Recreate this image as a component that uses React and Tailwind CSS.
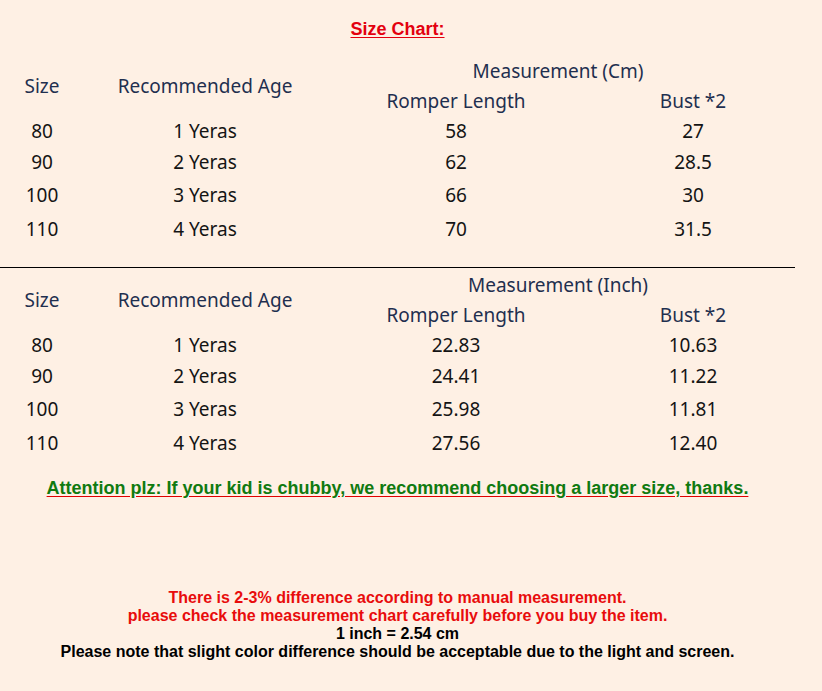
import React from "react";

const cm = [
  ["80", "1 Yeras", "58", "27"],
  ["90", "2 Yeras", "62", "28.5"],
  ["100", "3 Yeras", "66", "30"],
  ["110", "4 Yeras", "70", "31.5"],
];

const inch = [
  ["80", "1 Yeras", "22.83", "10.63"],
  ["90", "2 Yeras", "24.41", "11.22"],
  ["100", "3 Yeras", "25.98", "11.81"],
  ["110", "4 Yeras", "27.56", "12.40"],
];

const rowH = ["h-[30px]", "h-[32px]", "h-[34px]", "h-[34px]"];

const SizeTable = ({ unit, rows }) => {
  return (
    <div className="w-[800px] text-[19px] font-['Noto_Sans',sans-serif]">
      <div className="grid grid-cols-[84px_242px_260px_214px] text-[#1f2f4f]">
        <div className="row-span-2 flex items-center justify-center">Size</div>
        <div className="row-span-2 flex items-center justify-center">Recommended Age</div>
        <div className="col-span-2 h-[30px] flex items-center justify-center pr-[10px]">
          Measurement ({unit})
        </div>
        <div className="h-[30px] flex items-center justify-center">Romper Length</div>
        <div className="h-[30px] flex items-center justify-center">Bust *2</div>
      </div>
      {rows.map((r, i) => (
        <div
          key={r[0]}
          className={`grid grid-cols-[84px_242px_260px_214px] text-[#141414] ${rowH[i]}`}
        >
          {r.map((c, j) => (
            <div key={j} className="flex items-center justify-center">
              {c}
            </div>
          ))}
        </div>
      ))}
    </div>
  );
};

export default function App() {
  return (
    <div className="w-[822px] h-[691px] bg-[#fef0e4] overflow-hidden">
      <div className="w-[795px]">
        <p className="pt-[19px] text-center font-['Liberation_Sans',Arial,sans-serif] font-bold text-[18px] leading-[20px] text-[#e3000f] underline underline-offset-2">
          Size Chart:
        </p>
        <div className="mt-[17px]">
          <SizeTable unit="Cm" rows={cm} />
        </div>
        <div className="mt-[21px] h-[1px] bg-black" />
        <div className="mt-[2px]">
          <SizeTable unit="Inch" rows={inch} />
        </div>
        <p className="mt-[18px] text-center font-['Liberation_Sans',Arial,sans-serif] font-bold text-[18px] leading-[20px] text-[#107a10] underline decoration-[#e00000] underline-offset-2">
          Attention plz: If your kid is chubby, we recommend choosing a larger size, thanks.
        </p>
        <div className="mt-[91px] text-center font-['Liberation_Sans',Arial,sans-serif] font-bold text-[16px] leading-[18px]">
          <p className="text-[#e80c0c]">There is 2-3% difference according to manual measurement.</p>
          <p className="text-[#e80c0c]">please check the measurement chart carefully before you buy the item.</p>
          <p className="text-black">1 inch = 2.54 cm</p>
          <p className="text-black">Please note that slight color difference should be acceptable due to the light and screen.</p>
        </div>
      </div>
    </div>
  );
}
